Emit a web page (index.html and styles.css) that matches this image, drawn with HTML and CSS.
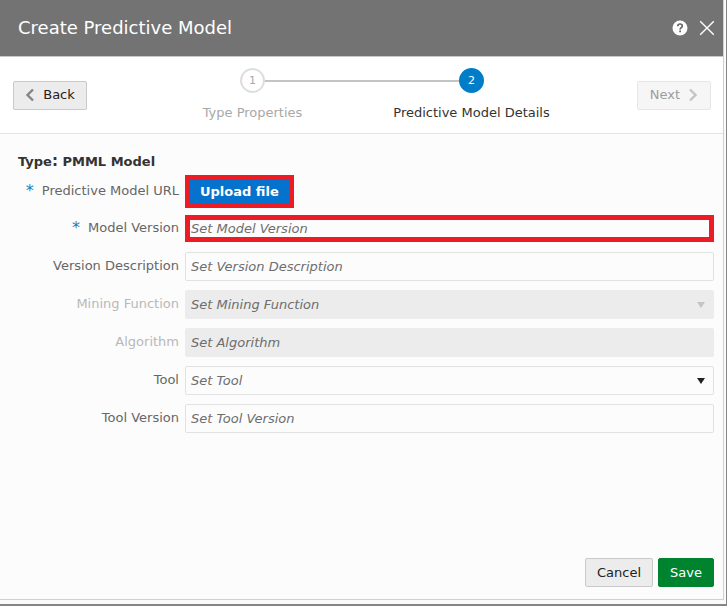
FILE: index.html
```html
<!DOCTYPE html>
<html lang="en">
<head>
<meta charset="utf-8">
<title>Create Predictive Model</title>
<link rel="stylesheet" href="styles.css">
</head>
<body>
<div class="frame">
  <main class="dialog">
    <header class="titlebar">
      <h1>Create Predictive Model</h1>
      <button class="icon-button" type="button" aria-label="Help">
        <svg width="16" height="16" viewBox="0 0 16 16"><circle cx="8" cy="8" r="7.5" fill="#fff"/><path d="M5.7 6.2C5.8 4.7 6.7 4 8 4s2.3.8 2.3 2c0 1.700-2.200 1.700-2.200 3.600" fill="none" stroke="#666" stroke-width="1.700"/><path d="M7.200 10.600h1.800v1.700H7.200z" fill="#666"/></svg>
      </button>
      <button class="icon-button" type="button" aria-label="Close">
        <svg width="16" height="16" viewBox="0 0 16 16"><path d="M1.200 1.200l13.600 13.600M14.800 1.200L1.200 14.800" fill="none" stroke="#fff" stroke-width="1.400"/></svg>
      </button>
    </header>

    <nav class="train" aria-label="Steps">
      <button class="button" type="button">
        <svg width="10" height="14" viewBox="0 0 10 14"><path d="M8 1.500L2.500 7 8 12.500" fill="none" stroke="#858585" stroke-width="2.400"/></svg>
        Back
      </button>
      <ol class="steps">
        <li class="step"><span class="step-number">1</span><span>Type Properties</span></li>
        <li class="step current" aria-current="step"><span class="step-number">2</span><span>Predictive Model Details</span></li>
      </ol>
      <button class="button" type="button" disabled>
        Next
        <svg width="10" height="14" viewBox="0 0 10 14"><path d="M2 1.500L7.500 7 2 12.500" fill="none" stroke="#c4c4c4" stroke-width="2.400"/></svg>
      </button>
    </nav>

    <form class="form" id="model-form">
      <h2>Type<span class="colon">:</span> PMML Model</h2>
      <div class="row upload-row">
        <label for="upload"><span class="required">*</span>Predictive Model URL</label>
        <button class="upload" id="upload" type="button">Upload file</button>
      </div>
      <div class="fields">
        <div class="row">
          <label for="version"><span class="required">*</span>Model Version</label>
          <div class="control highlight"><input id="version" type="text" placeholder="Set Model Version" required></div>
        </div>
        <div class="row">
          <label for="description">Version Description</label>
          <div class="control"><input id="description" type="text" placeholder="Set Version Description"></div>
        </div>
        <div class="row off">
          <label for="mining">Mining Function</label>
          <div class="control">
            <select id="mining" disabled><option>Set Mining Function</option></select>
            <svg class="arrow" width="8" height="6" viewBox="0 0 8 6"><path d="M0 0h8L4 6z"/></svg>
          </div>
        </div>
        <div class="row off">
          <label for="algorithm">Algorithm</label>
          <div class="control"><input id="algorithm" type="text" placeholder="Set Algorithm" disabled></div>
        </div>
        <div class="row">
          <label for="tool">Tool</label>
          <div class="control">
            <select id="tool"><option>Set Tool</option></select>
            <svg class="arrow" width="8" height="6" viewBox="0 0 8 6"><path d="M0 0h8L4 6z"/></svg>
          </div>
        </div>
        <div class="row">
          <label for="tool-version">Tool Version</label>
          <div class="control"><input id="tool-version" type="text" placeholder="Set Tool Version"></div>
        </div>
      </div>
    </form>

    <footer class="actions">
      <button class="button" type="button">Cancel</button>
      <button class="button primary" type="submit" form="model-form">Save</button>
    </footer>
  </main>
</div>
</body>
</html>
```

FILE: styles.css
```css
* {
  box-sizing: border-box;
}

body {
  margin: 0;
  background: #858585;
  color: #333;
  font: 13px/18px "DejaVu Sans", sans-serif;
}

button,
input,
select {
  margin: 0;
  font: inherit;
}

h1,
h2,
ol {
  margin: 0;
  padding: 0;
}

.frame {
  display: flex;
  min-height: 100vh;
  padding: 0 1px 2px 0;
}

.dialog {
  display: flex;
  flex: 1;
  flex-direction: column;
  margin: 0 2px 4px 0;
  border: solid #d0d0d0;
  border-width: 0 1px 1px 0;
  outline: 4px solid #fafafa;
  clip-path: inset(0 -2px -4px 0);
  background: #fcfcfc;
}

.titlebar {
  display: flex;
  align-items: center;
  gap: 11px;
  height: 57px;
  padding: 0 8px 1px 18px;
  border-bottom: 1px solid #c8c8c8;
  background: #737373;
}

.titlebar h1 {
  flex: 1;
  color: #fff;
  font-size: 18px;
  font-weight: 400;
  line-height: 24px;
}

.icon-button {
  display: flex;
  padding: 0;
  border: 0;
  background: none;
}

.train {
  display: flex;
  align-items: center;
  justify-content: space-between;
  height: 77px;
  padding: 0 12px 0 13px;
  border-bottom: 1px solid #dfe4e7;
  background: #fff;
}

.button {
  display: flex;
  align-items: center;
  justify-content: center;
  gap: 8px;
  height: 29px;
  padding: 0 11px;
  border: 1px solid #c9c9c9;
  border-radius: 2px;
  background: #ececec;
  color: #222;
}

.train .button {
  min-width: 74px;
}

.button:disabled {
  border-color: #e6e6e6;
  background: #f6f6f6;
  color: #9c9c9c;
}

.primary {
  border-color: #00832f;
  background: #00832f;
  color: #fff;
}

.steps {
  display: flex;
  flex: 1;
  max-width: 438px;
  list-style: none;
}

.step {
  position: relative;
  display: flex;
  flex: 1;
  flex-direction: column;
  align-items: center;
  gap: 11px;
  color: #a8a8a8;
}

.step + .step::before {
  content: "";
  position: absolute;
  top: 12px;
  right: 50%;
  width: 100%;
  height: 2px;
  background: #c4c4c4;
}

.step-number {
  z-index: 1;
  width: 25px;
  height: 25px;
  border: 2px solid #dedede;
  border-radius: 50%;
  background: #fff;
  font-size: 11px;
  line-height: 21px;
  text-align: center;
}

.step:not(.current) {
  z-index: 1;
}

.current {
  color: #333;
}

.current .step-number {
  border-color: #007dc8;
  background: #007dc8;
  color: #fff;
}

.form {
  flex: 1;
  padding: 17px 9px 0 18px;
}

.form h2 {
  font-size: 13px;
  line-height: 20px;
}

.colon {
  font-size: 15px;
}

.row {
  display: grid;
  grid-template-columns: 161px 1fr;
  align-items: center;
  gap: 6px;
}

.row label {
  display: flex;
  align-items: center;
  justify-content: flex-end;
  gap: 8px;
  height: 18px;
  margin-bottom: 2px;
  color: #666;
  white-space: nowrap;
}

.required {
  color: #1c7cbd;
  font-size: 16px;
}

.upload-row {
  margin: 3px 0 6px;
}

.upload {
  justify-self: start;
  height: 33px;
  padding: 0 10px;
  border: 5px solid #ed1c24;
  background: #0572ce;
  color: #fff;
  font-weight: 700;
}

.fields {
  display: grid;
  gap: 9px;
}

.control {
  position: relative;
  height: 29px;
}

.control input,
.control select {
  display: block;
  width: 100%;
  height: 100%;
  padding: 0 5px;
  border: 1px solid #e2e2e2;
  border-radius: 2px;
  outline: 0;
  appearance: none;
  background: #fcfcfc;
  color: #6e6e6e;
  font-style: italic;
  opacity: 1;
}

.control input::placeholder {
  color: #6e6e6e;
}

.highlight {
  padding: 1px 0;
}

.highlight input {
  padding: 0 1px;
  border: 5px solid #ed1c24;
  border-radius: 0;
}

.arrow {
  position: absolute;
  top: 12px;
  right: 9px;
  fill: #222;
  pointer-events: none;
}

.off label {
  color: #b8b8b8;
}

.control input:disabled,
.control select:disabled {
  border-color: #ececec;
  background: #ececec;
}

.off .arrow {
  fill: #c4c4c4;
}

.actions {
  display: flex;
  justify-content: flex-end;
  gap: 5px;
  padding: 12px 9px;
}
```
